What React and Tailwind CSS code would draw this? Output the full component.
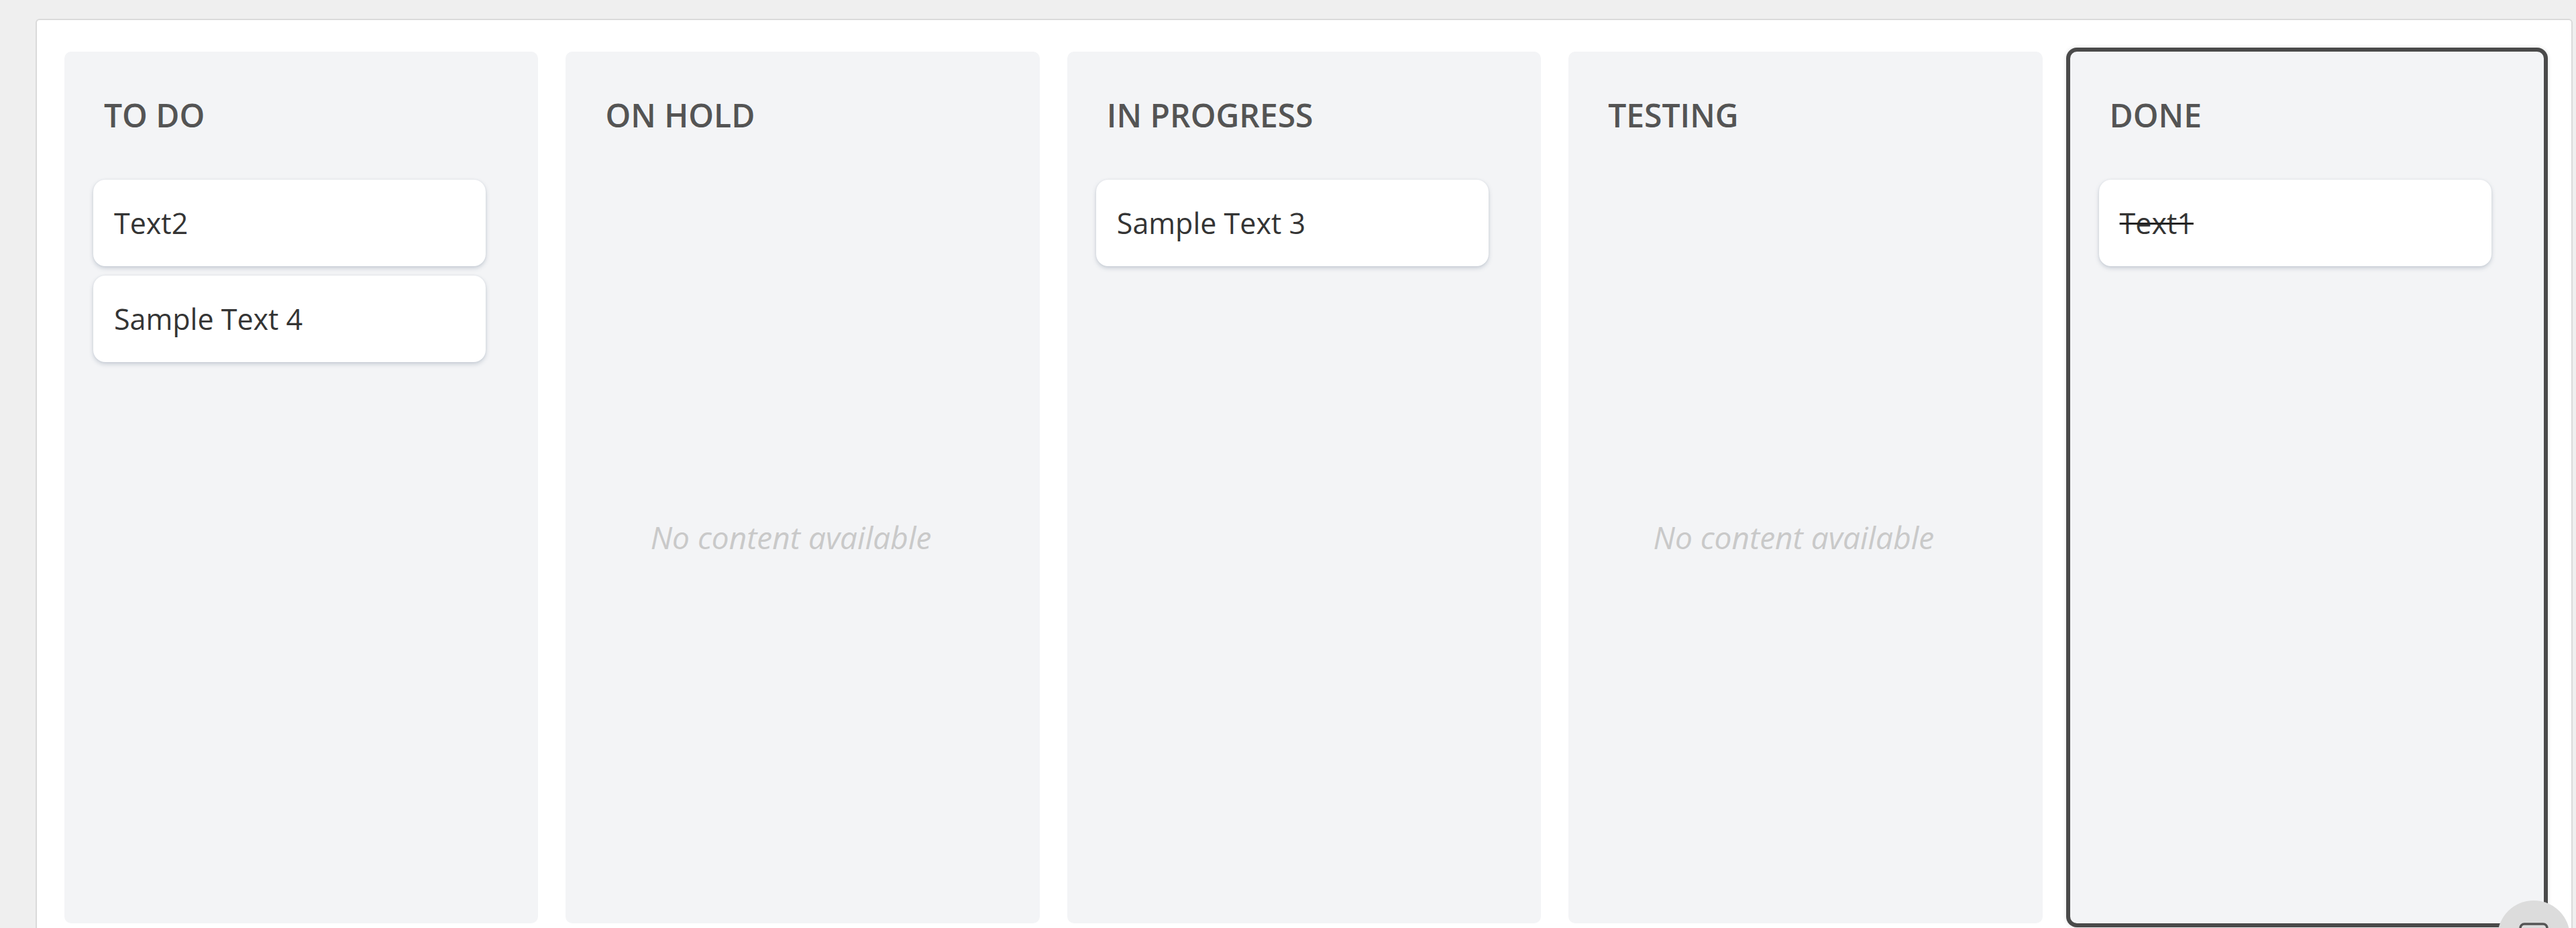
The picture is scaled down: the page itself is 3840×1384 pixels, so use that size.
import React from "react";

const columns = [
  { title: "TO DO", cards: [{ text: "Text2" }, { text: "Sample Text 4" }] },
  { title: "ON HOLD", cards: [] },
  { title: "IN PROGRESS", cards: [{ text: "Sample Text 3" }] },
  { title: "TESTING", cards: [] },
  { title: "DONE", cards: [{ text: "Text1", done: true }], active: true },
];

function Card({ text, done }) {
  return (
    <div className="h-[129px] w-[585px] rounded-[18px] bg-white flex items-center px-[31px] shadow-[0_3px_6px_rgba(100,116,139,0.3),0_0_3px_rgba(100,116,139,0.1)]">
      <span
        className={
          "text-[43px] leading-none text-[#343434] " +
          (done ? "line-through decoration-[3px] decoration-[#222222]" : "")
        }
      >
        {text}
      </span>
    </div>
  );
}

function Column({ title, cards, active }) {
  return (
    <div
      className={
        "h-[1300px] rounded-[10px] bg-[#f3f4f6] flex flex-col " +
        (active
          ? "shadow-[0_0_0_6px_#4a4a4a,0_0_6px_6px_rgba(0,0,0,0.12)]"
          : "")
      }
    >
      <div className="pl-[59px] pt-[70px] pb-[72px]">
        <h2 className="text-[48px] leading-[49px] font-semibold text-[#545454]">
          {title}
        </h2>
      </div>
      <div className="flex-1 flex flex-col gap-[14px] pl-[43px] pr-[78px] pb-[43px]">
        {cards.length === 0 ? (
          <div className="flex-1 flex items-center justify-center">
            <span className="text-[46px] italic text-[#c9c9c9]">
              No content available
            </span>
          </div>
        ) : (
          cards.map((c, i) => <Card key={i} {...c} />)
        )}
      </div>
    </div>
  );
}

export default function App() {
  return (
    <div
      className="relative h-[1384px] w-[3840px] overflow-hidden bg-[#efefef]"
      style={{ fontFamily: '"Open Sans", "Noto Sans", sans-serif' }}
    >
      <div className="ml-[53px] mt-[28px] w-[3782px] h-[1420px] rounded-[6px] border-2 border-[#dadada] bg-white px-[41px] pt-[47px]">
        <div className="grid grid-cols-5 gap-[41px]">
          {columns.map((col) => (
            <Column key={col.title} {...col} />
          ))}
        </div>
      </div>
      <div className="absolute left-[3723px] top-[1343px] h-[108px] w-[108px] rounded-full bg-[#dcdcdc] flex items-center justify-center">
        <svg width="44" height="42" viewBox="0 0 44 42" fill="none">
          <rect x="2" y="2" width="40" height="38" rx="6" stroke="#555555" strokeWidth="3.5" />
        </svg>
      </div>
    </div>
  );
}
